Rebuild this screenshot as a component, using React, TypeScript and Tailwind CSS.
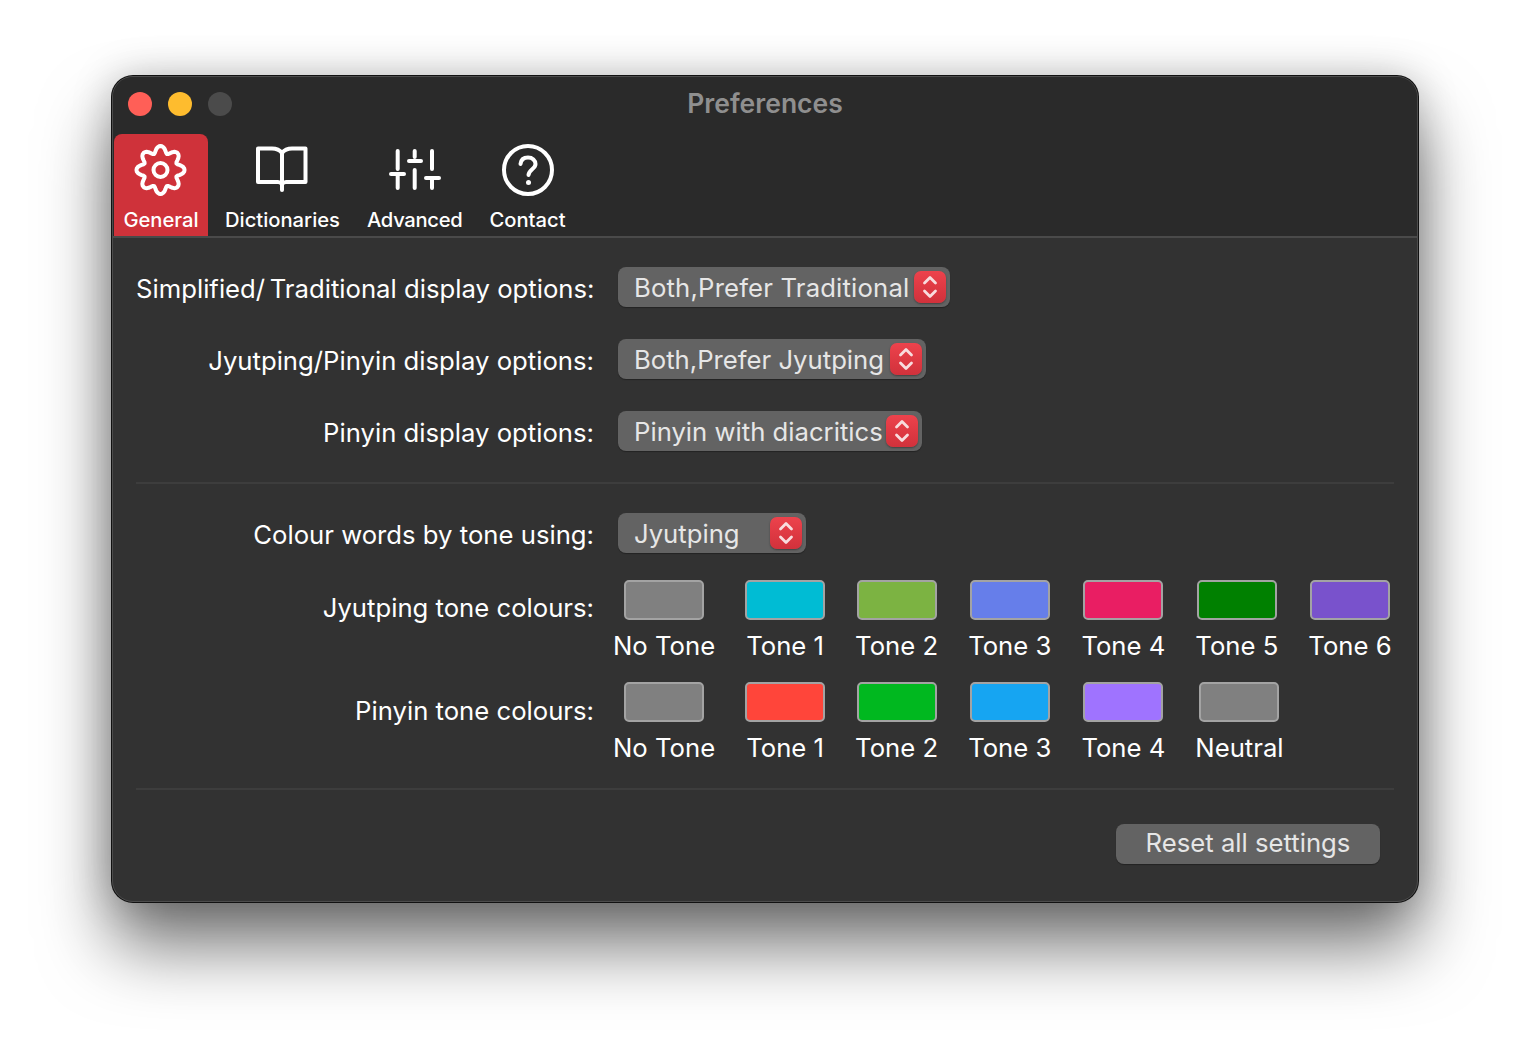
import type { ReactNode } from 'react';

const FONT = 'font-["Inter","Liberation_Sans",sans-serif]';

// wavy 8 tooth outline, same radius function all the way round
const gearPath = Array.from({ length: 97 }, (_, i) => {
  const a = (i / 96) * Math.PI * 2;
  const r = 21 + 3.4 * Math.cos(8 * a) - 0.4 * Math.cos(16 * a);
  const x = 29.5 + r * Math.sin(a);
  const y = 30 - r * Math.cos(a);
  return `${i === 0 ? 'M' : 'L'}${x.toFixed(2)} ${y.toFixed(2)}`;
}).join(' ');

function Icon({ children }: { children: ReactNode }) {
  return (
    <svg
      width="60"
      height="60"
      viewBox="0 0 60 60"
      fill="none"
      stroke="white"
      strokeWidth="4"
      strokeLinecap="round"
      strokeLinejoin="round"
    >
      {children}
    </svg>
  );
}

const GearIcon = () => (
  <Icon>
    <path d={gearPath} />
    <circle cx="29.5" cy="30" r="7" />
  </Icon>
);

const BookIcon = () => (
  <Icon>
    <path d="M30 13 C27 9 24 8.5 20 8.5 H6 V42 H26 C28 42 29 43 30 44 C31 43 32 42 34 42 H53.5 V8.5 H40 C36 8.5 33 9 30 13 Z" />
    <path d="M30 13 V50" />
  </Icon>
);

const SlidersIcon = () => (
  <Icon>
    <path d="M12.7 11 V29" />
    <path d="M6 34 H19" />
    <path d="M12.7 34 V48" />
    <path d="M29.7 11 V17" />
    <path d="M24 21 H36" />
    <path d="M29.7 30 V48" />
    <path d="M47 11 V29" />
    <path d="M41 38 H54" />
    <path d="M47 38 V48" />
  </Icon>
);

const HelpIcon = () => (
  <Icon>
    <circle cx="31" cy="30" r="24" />
    <path d="M23.5 24 C24 19.5 27 17.5 31 17.5 C35.5 17.5 38.5 20.5 38.5 24 C38.5 29 32 29.5 31.5 35" />
    <path d="M31.5 42.5 V42.6" strokeWidth="5" />
  </Icon>
);

const tabs = [
  { label: 'General', icon: <GearIcon />, tabClass: 'w-[94px] mr-[-1px] bg-[#cf323a]' },
  { label: 'Dictionaries', icon: <BookIcon />, tabClass: '' },
  { label: 'Advanced', icon: <SlidersIcon />, tabClass: 'tracking-[-0.3px]' },
  { label: 'Contact', icon: <HelpIcon />, tabClass: '' },
];

const jyutpingTones = [
  { label: 'No Tone', color: 'bg-[#808080]' },
  { label: 'Tone 1', color: 'bg-[#00bcd4]' },
  { label: 'Tone 2', color: 'bg-[#7cb342]' },
  { label: 'Tone 3', color: 'bg-[#667eea]' },
  { label: 'Tone 4', color: 'bg-[#e91e63]' },
  { label: 'Tone 5', color: 'bg-[#008000]' },
  { label: 'Tone 6', color: 'bg-[#7952cc]' },
];

const pinyinTones = [
  { label: 'No Tone', color: 'bg-[#808080]' },
  { label: 'Tone 1', color: 'bg-[#ff453a]' },
  { label: 'Tone 2', color: 'bg-[#00b81f]' },
  { label: 'Tone 3', color: 'bg-[#16a5f2]' },
  { label: 'Tone 4', color: 'bg-[#9f73ff]' },
  { label: 'Neutral', color: 'bg-[#808080]' },
];

function Popup({ value, width }: { value: string; width: string }) {
  return (
    <div
      className={`flex h-10 items-center justify-between rounded-[8px] bg-[#636363] pl-4 pr-1 text-[#e6e6e6] shadow-[0_1px_1px_rgba(0,0,0,0.3)] ${width}`}
    >
      <span className="whitespace-nowrap pt-[2px]">{value}</span>
      <span className="flex h-8 w-8 items-center justify-center rounded-[7px] bg-gradient-to-b from-[#ed424c] to-[#d1313b] shadow-[0_1px_2px_rgba(0,0,0,0.35)]">
        <svg
          width="18"
          height="26"
          viewBox="0 0 18 26"
          fill="none"
          stroke="#f8dcde"
          strokeWidth="2.8"
          strokeLinecap="round"
          strokeLinejoin="round"
        >
          <path d="M3.5 9 L9 3.5 L14.5 9" />
          <path d="M3.5 17 L9 22.5 L14.5 17" />
        </svg>
      </span>
    </div>
  );
}

function ToneRow({ tones }: { tones: { label: string; color: string }[] }) {
  return (
    <div className="ml-[-5px] flex gap-[30px]">
      {tones.map((tone) => (
        <div key={tone.label} className="flex flex-col items-center">
          <div className={`h-10 w-20 rounded-[5px] border-2 border-[#a3a3a3] ${tone.color}`} />
          <span className="mt-[10px] h-8 whitespace-nowrap leading-8 text-white">{tone.label}</span>
        </div>
      ))}
    </div>
  );
}

function Row({
  label,
  children,
  className,
  labelClass = 'h-10 leading-[44px]',
}: {
  label: string;
  children: ReactNode;
  className?: string;
  labelClass?: string;
}) {
  return (
    <div className={`flex gap-6 ${className ?? ''}`}>
      <div className={`w-[458px] whitespace-nowrap text-right text-white ${labelClass}`}>{label}</div>
      {children}
    </div>
  );
}

export default function App() {
  return (
    <div className={`min-h-[1050px] bg-white pl-[112px] pt-[76px] ${FONT}`}>
      <div className="h-[826px] w-[1306px] overflow-hidden rounded-[21px] border border-[#4c4c4c] bg-[#323232] shadow-[0_0_0_1px_#111,0_44px_70px_rgba(0,0,0,0.55),0_0_40px_rgba(0,0,0,0.22)]">
        {/* Title bar */}
        <div className="bg-[#2a2a2a]">
          <div className="grid h-[57px] grid-cols-[1fr_auto_1fr] items-center pb-[3px]">
            <div className="flex gap-4 pl-[15px]">
              <span className="h-6 w-6 rounded-full bg-[#ff5f57]" />
              <span className="h-6 w-6 rounded-full bg-[#febc2e]" />
              <span className="h-6 w-6 rounded-full bg-[#4b4b4b]" />
            </div>
            <div className="text-[26.5px] font-semibold text-[#8f8f8f]">Preferences</div>
          </div>

          {/* Toolbar */}
          <div className="flex gap-[9px] pl-px">
            {tabs.map((tab) => (
              <div
                key={tab.label}
                className={`flex h-[102px] flex-col items-center rounded-t-[8px] px-[9px] ${tab.tabClass}`}
              >
                <div className="mt-[6px]">{tab.icon}</div>
                <span className="mt-[6px] whitespace-nowrap text-[20.2px] font-medium leading-7 text-white">
                  {tab.label}
                </span>
              </div>
            ))}
          </div>
        </div>

        {/* Settings form */}
        <div className="border-t-2 border-[#4a4a4a] px-[23px] pt-[29px] text-[25.7px]">
          <div className="flex flex-col gap-8">
            <Row label={'Simplified/\u2009Traditional display options:'}>
              <Popup value="Both,Prefer Traditional" width="w-[332px] tracking-[0.17px]" />
            </Row>
            <Row label="Jyutping/Pinyin display options:">
              <Popup value="Both,Prefer Jyutping" width="w-[308px]" />
            </Row>
            <Row label="Pinyin display options:">
              <Popup value="Pinyin with diacritics" width="w-[304px]" />
            </Row>
          </div>

          <div className="mb-[29px] mt-[31px] h-0.5 bg-[#3d3d3d]" />

          <Row label="Colour words by tone using:">
            <Popup value="Jyutping" width="w-[188px]" />
          </Row>
          <Row label="Jyutping tone colours:" className="mt-[27px]" labelClass="pt-[8px] leading-10">
            <ToneRow tones={jyutpingTones} />
          </Row>
          <Row label="Pinyin tone colours:" className="mt-[20px]" labelClass="pt-[9px] leading-10">
            <ToneRow tones={pinyinTones} />
          </Row>

          <div className="mt-[24px] h-0.5 bg-[#3d3d3d]" />

          <div className="mt-[34px] flex justify-end pr-[14px]">
            <div className="flex h-10 w-[264px] items-center justify-center rounded-[8px] bg-[#636363] pb-[2px] text-[#e6e6e6] shadow-[0_1px_1px_rgba(0,0,0,0.3)]">
              Reset all settings
            </div>
          </div>
        </div>
      </div>
    </div>
  );
}
